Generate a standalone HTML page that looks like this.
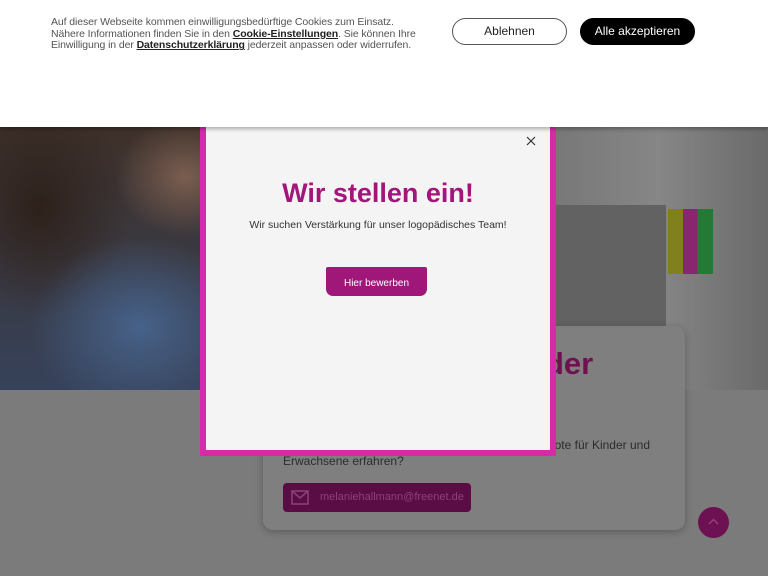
<!DOCTYPE html>
<html><head><meta charset="utf-8"><style>
*{margin:0;padding:0;box-sizing:border-box}
body{width:768px;height:576px;overflow:hidden;position:relative;background:#7b7b7b;font-family:"Liberation Sans",sans-serif}
.hero{position:absolute;left:0;top:127px;width:768px;height:263px;overflow:hidden}
.left{position:absolute;left:0;top:0;width:260px;height:263px;background:
radial-gradient(ellipse 70px 60px at 185px 50px,#7a5e50,transparent),
radial-gradient(ellipse 110px 90px at 140px 200px,#46628a,transparent),
radial-gradient(ellipse 90px 110px at 40px 80px,#2e211b,transparent),
linear-gradient(#3e3029,#36425a)}
.right{position:absolute;left:550px;top:0;width:218px;height:263px;background:linear-gradient(90deg,#777,#868686 50%,#6a6a6a)}
.shelf{position:absolute;left:556px;top:78px;width:110px;height:185px;background:#626262}
.clips{position:absolute;left:668px;top:82px;width:45px;height:65px;background:linear-gradient(90deg,#80801c 0 33%,#8a2670 33% 66%,#247a34 66%)}
.card{position:absolute;left:263px;top:326px;width:422px;height:204px;background:#7f7f7f;border-radius:10px;box-shadow:0 2px 8px rgba(0,0,0,.25)}
.card h2{position:absolute;left:282px;top:20px;font:bold 31px "Liberation Sans",sans-serif;color:#6e1150}
.card p{position:absolute;left:20px;top:111px;width:367px;font-size:12px;line-height:16px;color:#2c2c2c;text-align:right}
.card p span{display:block;text-align:left}
.mail{position:absolute;left:20px;top:157px;width:188px;height:29px;background:#5a0c45;border-radius:4px;color:#8a4378;font-size:11px;line-height:29px;padding-left:37px}
.mail svg{position:absolute;left:8px;top:7px}
.top{position:absolute;left:698px;top:507px;width:31px;height:31px;border-radius:50%;background:#6e1153}
.top svg{position:absolute;left:10px;top:11px}
.banner{position:absolute;left:0;top:0;width:768px;height:127px;background:#fff;box-shadow:0 2px 4px rgba(0,0,0,.3);z-index:5}
.banner .t{position:absolute;left:51px;top:17px;font-size:10.5px;line-height:11.7px;color:#555;letter-spacing:-.1px}
.banner b{color:#222;text-decoration:underline}
.btn{position:absolute;top:18px;height:27px;border-radius:14px;font-size:12px;line-height:25px;text-align:center}
.b1{left:452px;width:115px;border:1px solid #555;color:#222}
.b2{left:580px;width:115px;background:#000;color:#fff;border:1px solid #000}
.pop{position:absolute;left:200px;top:110px;width:356px;height:346px;background:#f4f4f4;border:6px solid #d62aa8;border-top:0;z-index:3}
.pop h1{position:absolute;left:0;width:344px;top:68px;text-align:center;font:bold 27px "Liberation Sans",sans-serif;color:#a3157a}
.pop .s{position:absolute;left:0;width:344px;top:109px;text-align:center;font-size:10.5px;color:#333}
.pop .h{position:absolute;left:120px;top:157px;width:101px;height:29px;background:#a0177a;border-radius:2px 2px 7px 7px;color:#fff;font-size:10px;line-height:33px;text-align:center}
.x{position:absolute;left:320px;top:26px}
</style></head><body>
<div class="hero"><div class="left"></div><div class="right"></div><div class="shelf"></div><div class="clips"></div></div>
<div class="card"><h2>der</h2><p>ote für Kinder und<span>Erwachsene erfahren?</span></p>
<div class="mail"><svg width="18" height="15" viewBox="0 0 18 15"><rect x="1" y="1" width="16" height="13" fill="none" stroke="#8a4378" stroke-width="1.5"/><path d="M1 1l8 7 8-7" fill="none" stroke="#8a4378" stroke-width="1.5"/></svg>melaniehallmann@freenet.de</div></div>
<div class="top"><svg width="11" height="8" viewBox="0 0 11 8"><path d="M1 6l4.5-4.5L10 6" fill="none" stroke="#a0407f" stroke-width="1.3"/></svg></div>
<div class="pop"><svg class="x" width="10" height="10" viewBox="0 0 10 10"><path d="M1 1l8 8M9 1l-8 8" stroke="#333" stroke-width="1.2"/></svg><h1>Wir stellen ein!</h1><div class="s">Wir suchen Verstärkung für unser logopädisches Team!</div><div class="h">Hier bewerben</div></div>
<div class="banner"><div class="t">Auf dieser Webseite kommen einwilligungsbedürftige Cookies zum Einsatz.<br>Nähere Informationen finden Sie in den <b>Cookie-Einstellungen</b>. Sie können Ihre<br>Einwilligung in der <b>Datenschutzerklärung</b> jederzeit anpassen oder widerrufen.</div>
<div class="btn b1">Ablehnen</div><div class="btn b2">Alle akzeptieren</div></div>
</body></html>
